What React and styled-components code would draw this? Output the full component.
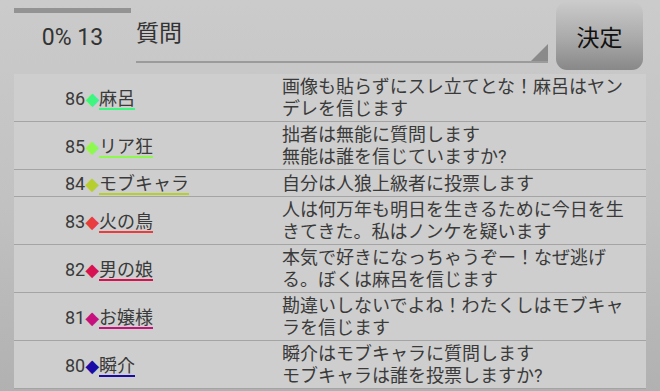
import React from "react";
import styled, { createGlobalStyle } from "styled-components";

const GlobalStyle = createGlobalStyle`
  html, body {
    margin: 0;
    height: 100%;
  }
  body {
    overflow: hidden;
    background: linear-gradient(180deg, #cbcbcb 0%, #c2c2c2 50%, #b1b1b1 100%);
    font-family: Roboto, "Noto Sans CJK JP", sans-serif;
    color: #3a3a3a;
  }
`;

const Screen = styled.div`
  padding: 0 14px;
  height: 391px;
`;

const Header = styled.div`
  display: flex;
  align-items: flex-start;
  height: 74px;
`;

const Status = styled.div`
  width: 117px;
  padding-top: 8px;
`;

const Track = styled.div`
  height: 5px;
  background: #939393;
`;

const Counter = styled.div`
  margin-top: 12px;
  font-size: 23px;
  line-height: 26px;
  text-align: center;
  color: #333;
`;

const Field = styled.div`
  position: relative;
  box-sizing: border-box;
  width: 412px;
  height: 63px;
  margin-left: 5px;
  padding-top: 16px;
  border-bottom: 2px solid #9b9b9b;
  font-family: "Noto Sans CJK JP", sans-serif;
  font-size: 23px;
  line-height: 30px;
  color: #333;
`;

const Corner = styled.span`
  position: absolute;
  right: 0;
  bottom: 0;
  width: 17px;
  height: 17px;
  background: #8a8a8a;
  clip-path: polygon(100% 0, 100% 100%, 0 100%);
`;

const Submit = styled.button`
  width: 87px;
  height: 68px;
  margin: 2px 0 0 8px;
  padding: 0;
  border: none;
  border-radius: 11px;
  background: linear-gradient(180deg, #cacaca 0%, #a9a9a9 55%, #888 100%);
  font-family: "Noto Sans CJK JP", sans-serif;
  font-size: 23px;
  color: #111;
`;

const List = styled.div`
  background: #cecece;
`;

const Row = styled.div`
  display: flex;
  align-items: center;
  min-height: 26px;
  border-bottom: 1px solid #a4a4a4;
`;

const Speaker = styled.div`
  box-sizing: border-box;
  width: 268px;
  padding-left: 51px;
  font-size: 18px;
  line-height: 22px;
  white-space: nowrap;
`;

const Mark = styled.span`
  font-family: "DejaVu Sans", sans-serif;
  color: ${(p) => p.$color};
`;

const Name = styled.span`
  display: inline-block;
  font-family: "Noto Sans CJK JP", sans-serif;
  border-bottom: 2px solid ${(p) => p.$color};
`;

const Message = styled.div`
  flex: 1;
  padding: 2px 12px 1px 0;
  font-size: 18px;
  line-height: 22px;
  white-space: pre-line;
`;

const posts = [
  { no: 86, name: "麻呂", color: "#3ef67e", text: "画像も貼らずにスレ立てとな！麻呂はヤンデレを信じます" },
  { no: 85, name: "リア狂", color: "#8ef84e", text: "拙者は無能に質問します\n無能は誰を信じていますか?" },
  { no: 84, name: "モブキャラ", color: "#b6cf2e", text: "自分は人狼上級者に投票します" },
  { no: 83, name: "火の鳥", color: "#e83c3e", text: "人は何万年も明日を生きるために今日を生きてきた。私はノンケを疑います" },
  { no: 82, name: "男の娘", color: "#d81250", text: "本気で好きになっちゃうぞー！なぜ逃げる。ぼくは麻呂を信じます" },
  { no: 81, name: "お嬢様", color: "#c8107c", text: "勘違いしないでよね！わたくしはモブキャラを信じます" },
  { no: 80, name: "瞬介", color: "#1a0aa6", text: "瞬介はモブキャラに質問します\nモブキャラは誰を投票しますか?" },
];

export default function App() {
  return (
    <>
      <GlobalStyle />
      <Screen>
        <Header>
          <Status>
            <Track />
            <Counter>0% 13</Counter>
          </Status>
          <Field>
            質問
            <Corner />
          </Field>
          <Submit>決定</Submit>
        </Header>
        <List>
          {posts.map((p) => (
            <Row key={p.no}>
              <Speaker>
                {p.no}
                <Mark $color={p.color}>◆</Mark>
                <Name $color={p.color}>{p.name}</Name>
              </Speaker>
              <Message>{p.text}</Message>
            </Row>
          ))}
        </List>
      </Screen>
    </>
  );
}
